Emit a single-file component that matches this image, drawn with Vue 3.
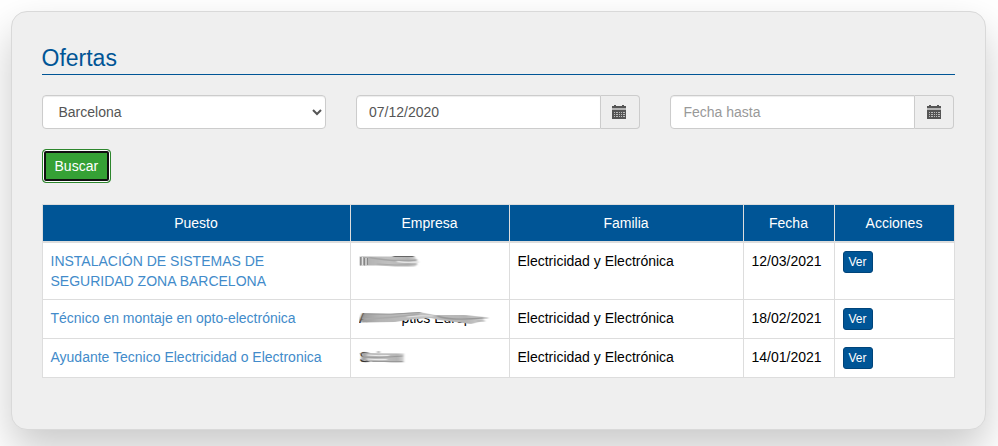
<script setup>
import { ref } from 'vue'

const provincia = ref('Barcelona')
const desde = ref('07/12/2020')
const hasta = ref('')

const columnas = ['Puesto', 'Empresa', 'Familia', 'Fecha', 'Acciones']
const ofertas = [
  {
    puesto: 'INSTALACIÓN DE SISTEMAS DE SEGURIDAD ZONA BARCELONA',
    familia: 'Electricidad y Electrónica',
    fecha: '12/03/2021',
    mancha: 'a',
  },
  {
    puesto: 'Técnico en montaje en opto-electrónica',
    familia: 'Electricidad y Electrónica',
    fecha: '18/02/2021',
    mancha: 'b',
  },
  {
    puesto: 'Ayudante Tecnico Electricidad o Electronica',
    familia: 'Electricidad y Electrónica',
    fecha: '14/01/2021',
    mancha: 'c',
  },
]
</script>

<template>
  <main class="panel">
    <h1>Ofertas</h1>
    <form class="filtros" @submit.prevent>
      <div class="selector">
        <select v-model="provincia" class="campo">
          <option>Barcelona</option>
        </select>
        <svg class="flecha" width="10" height="7" viewBox="0 0 10 7">
          <path d="M1 1l4 4 4-4" fill="none" stroke="#555" stroke-width="2" />
        </svg>
      </div>
      <div v-for="n in 2" :key="n" class="grupo">
        <input v-if="n === 1" v-model="desde" class="campo" type="text" />
        <input v-else v-model="hasta" class="campo" type="text" placeholder="Fecha hasta" />
        <span class="calendario" :class="{ primero: n === 1 }">
          <svg width="14" height="14" viewBox="0 0 14 14">
            <path d="M2 0h2v1h6V0h2v1h2v2H0V1h2z" fill="#555" />
            <path d="M0 3h14v2H0z" fill="#b4b4b4" />
            <path d="M0 5h14v9H0z" fill="#555" />
            <path
              d="M2 7h1v1H2zM4 7h2v1H4zM7 7h1v1H7zM9 7h1v1H9zM11 7h2v1h-2zM2 9h1v1H2zM4 9h2v1H4zM7 9h1v1H7zM9 9h1v1H9zM11 9h2v1h-2zM2 11h1v1H2zM4 11h2v1H4zM7 11h1v1H7zM9 11h1v1H9zM11 11h2v1h-2z"
              fill="#bbb"
            />
          </svg>
        </span>
      </div>
    </form>
    <button class="buscar" type="button">Buscar</button>

    <table>
      <colgroup>
        <col class="c-puesto" />
        <col class="c-empresa" />
        <col class="c-familia" />
        <col class="c-fecha" />
        <col class="c-acciones" />
      </colgroup>
      <thead>
        <tr>
          <th v-for="c in columnas" :key="c">{{ c }}</th>
        </tr>
      </thead>
      <tbody>
        <tr v-for="o in ofertas" :key="o.fecha">
          <td><a href="#">{{ o.puesto }}</a></td>
          <td>
            <svg class="empresa" width="140" height="20" viewBox="0 0 140 20">
              <defs>
                <linearGradient :id="'g' + o.mancha" x1="0" y1="0" x2="1" y2="0">
                  <stop offset="0" stop-color="#999" />
                  <stop offset="0.15" stop-color="#b4b4b4" />
                  <stop offset="0.5" stop-color="#c0c0c0" />
                  <stop offset="0.85" stop-color="#b4b4b4" />
                  <stop offset="1" stop-color="#d4d4d4" />
                </linearGradient>
                <filter :id="'f' + o.mancha" x="-10%" y="-40%" width="120%" height="180%">
                  <feGaussianBlur stdDeviation="0.8 0.6" />
                </filter>
              </defs>
              <g v-if="o.mancha === 'a'">
                <g filter="url(#fa)" fill="none">
                  <path d="M1 5.5L34 5.5 56 6 58 9 58 14 56 15.5 36 15.5 18 14.5 1 14.5z" fill="url(#ga)" />
                  <path d="M10 6.5Q32 11 58 9" stroke="#a4a4a4" stroke-width="1.5" />
                  <path d="M34 5.5h21" stroke="#666" stroke-width="1" />
                  <path d="M18 13Q38 15 58 13" stroke="#aaa" stroke-width="1" />
                  <path d="M38 10.5Q48 12 60 11" stroke="#e4e4e4" stroke-width="1.3" />
                </g>
                <path d="M1.5 6v8.5M5.5 7v7.5M8.5 7v7" stroke="#777" stroke-opacity="0.7" />
                <path d="M3.5 6v8.5M7 7v7" stroke="#e4e4e4" />
              </g>
              <g v-else-if="o.mancha === 'b'">
                <text x="0" y="15">A</text>
                <text x="42.5" y="15">ptics Europe</text>
                <g filter="url(#fb)" fill="none">
                  <path d="M8 2H76L122 3V10L134 12V19H114V15L90 12 64 9 42 11 42 17H6z" fill="#fff" />
                  <path
                    d="M4 5L30 6 60 4 76 7 106 7 126 9 124 13 112 16 96 14 80 12 72 10 52 11.5 36 14 2 14.5z"
                    fill="url(#gb)"
                  />
                  <path d="M4 5.5L0 14.5" stroke="#555" stroke-width="1.2" />
                  <path d="M5 6Q32 7 62 4.5" stroke="#999" stroke-width="1" />
                  <path d="M6 11Q34 10 60 6" stroke="#aaa" stroke-width="1.5" />
                  <path d="M48 9Q63 7 74 8" stroke="#e4e4e4" stroke-width="1" />
                  <path d="M78 8Q92 13 124 10" stroke="#999" stroke-width="1.5" />
                  <path d="M120 10h9M118 13h8" stroke="#aaa" stroke-width="1" />
                </g>
              </g>
              <g v-else>
                <text x="0.5" y="15">S</text>
                <g filter="url(#fc)" fill="none">
                  <path d="M7 3H46V16H9z" fill="#fff" />
                  <path d="M3 6L45 6.5 45 15.5 32 15.5 12 14 2 13.5z" fill="url(#gc)" />
                  <path d="M1 7q4-3 9-1M18 5h3" stroke="#777" stroke-width="1" />
                  <path d="M2 13.5q3 2 9 1" stroke="#444" stroke-width="1" />
                  <path d="M4 10Q20 11 44 9M12 14.5h32" stroke="#999" stroke-width="1" />
                  <path d="M8 8Q20 9 30 8.5M8 12Q20 13 28 12.5" stroke="#eee" stroke-width="1" />
                </g>
              </g>
            </svg>
          </td>
          <td>{{ o.familia }}</td>
          <td>{{ o.fecha }}</td>
          <td><button class="ver" type="button">Ver</button></td>
        </tr>
      </tbody>
    </table>
  </main>
</template>

<style>
body {
  margin: 0;
  background: #fff;
}
#app {
  box-sizing: border-box;
  height: 446px;
  padding: 11px 0 0 11px;
  overflow: hidden;
}
</style>

<style scoped>
* {
  box-sizing: border-box;
}
.panel {
  width: 975px;
  height: 419px;
  padding: 30px;
  border: 1px solid #d9d9d9;
  border-radius: 16px;
  background: #efefef;
  box-shadow: 0 20px 42px rgba(0, 0, 0, 0.21);
  font: 14px/20px 'Liberation Sans', Arial, sans-serif;
  color: #000;
}
h1 {
  margin: 0 0 20px;
  height: 33px;
  padding-top: 3px;
  border-bottom: 1px solid #005596;
  color: #005596;
  font-size: 23px;
  font-weight: 400;
  line-height: 26px;
  text-indent: -0.5px;
}
.filtros {
  display: grid;
  grid-template-columns: repeat(3, 284px);
  column-gap: 30px;
}
.selector {
  position: relative;
  display: flex;
}
.campo {
  width: 100%;
  min-width: 0;
  height: 34px;
  margin: 0;
  padding: 6px 12px;
  border: 1px solid #ccc;
  border-radius: 4px;
  outline: 0;
  background: #fff;
  box-shadow: inset 0 1px 1px rgba(0, 0, 0, 0.075);
  color: #555;
  font: inherit;
}
.campo::placeholder {
  color: #999;
  opacity: 1;
}
select.campo {
  appearance: none;
  padding-left: 15.5px;
}
.flecha {
  position: absolute;
  right: 4px;
  top: 14px;
}
.grupo {
  display: flex;
}
.grupo .campo {
  flex: 1;
  border-radius: 4px 0 0 4px;
}
.grupo:last-child .campo {
  padding-left: 12.4px;
}
.calendario {
  display: flex;
  align-items: center;
  justify-content: center;
  width: 39px;
  border: 1px solid #ccc;
  border-left: 0;
  border-radius: 0 4px 4px 0;
  background: #eee;
}
.primero {
  padding-right: 2px;
}
.buscar {
  display: block;
  width: 69px;
  height: 34px;
  margin: 20px 0 21px;
  padding: 0 0.4px 0 0;
  border: 1px solid #2d862d;
  border-radius: 4px;
  outline: 0;
  background: #35a135;
  box-shadow: inset 0 0 0 1px #fff, inset 0 0 0 3px #101010;
  color: #fff;
  font: inherit;
}
table {
  width: 913px;
  table-layout: fixed;
  border-collapse: collapse;
  background: #fff;
}
.c-puesto {
  width: 308px;
}
.c-empresa {
  width: 159px;
}
.c-familia {
  width: 234px;
}
.c-fecha {
  width: 91px;
}
.c-acciones {
  width: 120px;
}
th,
td {
  padding: 8px;
  border: 1px solid #ddd;
  text-align: left;
  vertical-align: top;
}
th {
  padding-right: 9px;
  border-bottom-width: 2px;
  background: #005596;
  color: #fff;
  font-weight: 400;
  text-align: center;
}
td {
  padding-left: 7.5px;
}
a {
  color: #428bca;
  text-decoration: none;
}
.empresa {
  display: block;
}
.ver {
  display: block;
  width: 30px;
  height: 22px;
  padding: 0;
  border: 1px solid #00447a;
  border-radius: 3px;
  background: #005596;
  color: #fff;
  font: 12px/18px 'Liberation Sans', Arial, sans-serif;
}
</style>
